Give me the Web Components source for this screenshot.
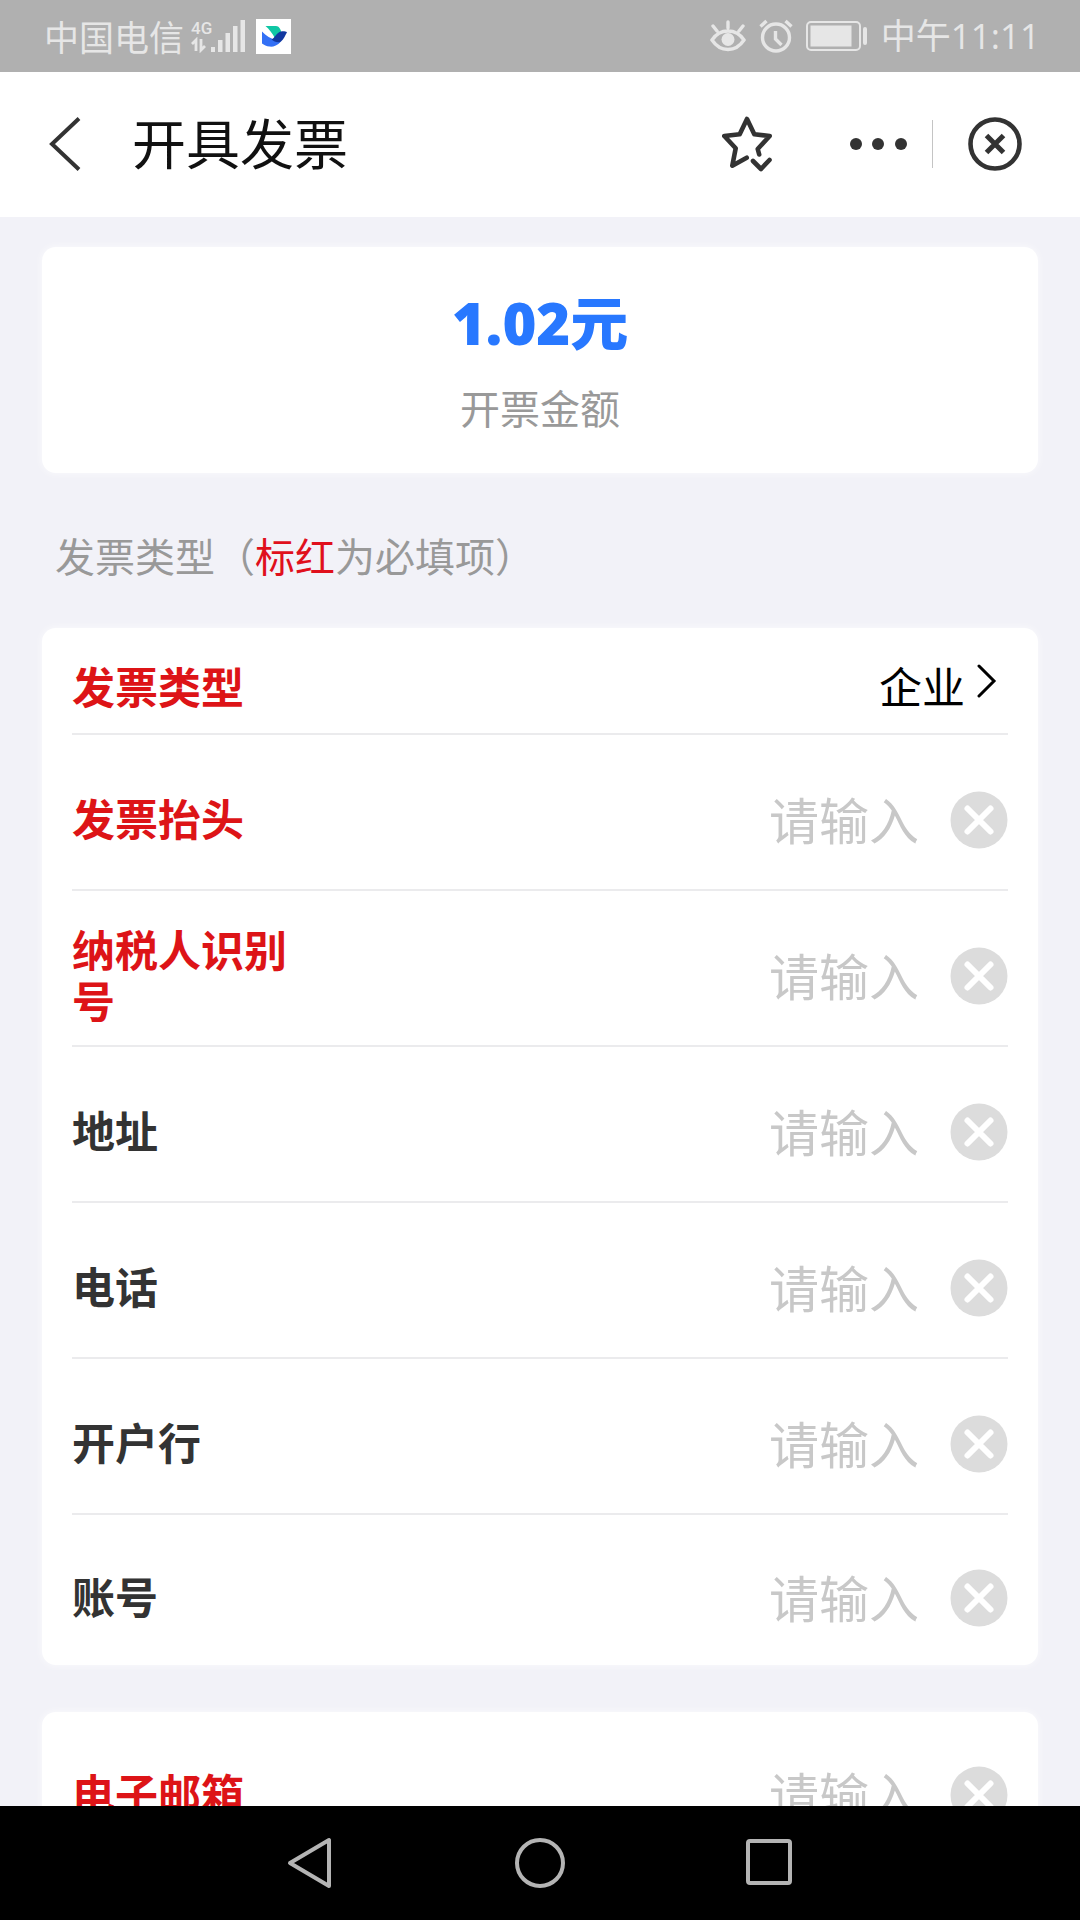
<!DOCTYPE html>
<html lang="zh-CN">
<head>
<meta charset="utf-8">
<meta name="viewport" content="width=device-width, initial-scale=1">
<title>开具发票</title>
<style>
  html, body { height: 100%; margin: 0; }
  body { font-family: "Noto Sans CJK SC", "Noto Sans", sans-serif; background: #f2f2f8; color: #333; }
</style>
</head>
<body>
<invoice-app>
  <status-bar slot="top" carrier="中国电信" time="中午11:11"></status-bar>
  <title-bar slot="top">开具发票</title-bar>

  <info-card><amount-view amount="1.02元">开票金额</amount-view></info-card>
  <section-title>发票类型（<span style="color:#e0101c">标红</span>为必填项）</section-title>
  <info-card>
    <select-row required>发票类型</select-row>
    <input-row required>发票抬头</input-row>
    <input-row required>纳税人识别号</input-row>
    <input-row>地址</input-row>
    <input-row>电话</input-row>
    <input-row>开户行</input-row>
    <input-row last>账号</input-row>
  </info-card>
  <info-card spaced>
    <input-row required last>电子邮箱</input-row>
  </info-card>

  <system-nav slot="bottom"></system-nav>
</invoice-app>

<script>
const define = (name, html, setup) => {
  const template = document.createElement('template');
  template.innerHTML = html;
  customElements.define(name, class extends HTMLElement {
    constructor() {
      super();
      this.attachShadow({ mode: 'open' }).append(template.content.cloneNode(true));
    }
    connectedCallback() { if (setup) setup(this, this.shadowRoot); }
  });
};

const buttonReset = `
  button { appearance: none; border: 0; margin: 0; padding: 0; background: none; color: inherit; font: inherit; display: flex; }
  svg { display: block; }
`;

define('invoice-app', `
  <style>
    :host { display: flex; flex-direction: column; height: 100vh; overflow: hidden; }
    main { flex: 1; min-height: 0; overflow: hidden; padding: 30px 42px 0; }
  </style>
  <slot name="top"></slot>
  <main><slot></slot></main>
  <slot name="bottom"></slot>
`);

define('status-bar', `
  <style>
    :host { display: flex; flex: none; align-items: center; height: 72px; padding: 0 40px 0 44px; background: #b0b0b0; color: #e6e6e6; font-size: 35px; line-height: 48px; }
    .left, .right { display: flex; align-items: center; }
    .left { flex: 1; gap: 7px; }
    .right { gap: 13px; }
    .logo { margin-left: 3px; }
    svg { display: block; }
    .net { display: flex; flex-direction: column; width: 20px; font: 500 17px/18px "Roboto", sans-serif; }
    .signal { display: flex; align-items: flex-end; }
    #time { font-family: "Open Sans", "Noto Sans CJK SC", sans-serif; }
  </style>
  <div class="left">
    <span id="carrier"></span>
    <div class="signal">
      <div class="net"><span>4G</span>
        <svg width="18" height="16" viewBox="0 0 18 16" fill="none" stroke="#e6e6e6" stroke-width="2.800"><path d="M1 7l4-4v11M10 2v11l4-4"/></svg>
      </div>
      <svg width="35" height="34" viewBox="0 0 35 34" fill="#e6e6e6"><path d="M0 28h4v5H0zM7 21h4.500v12H7zM14.500 14H19v19h-4.500zM22 7h4.500v26H22zM29.500 1H34v32h-4.500z"/></svg>
    </div>
    <svg class="logo" width="35" height="35" viewBox="0 0 35 35"><path fill="#fff" d="M0 0h35v35H0z"/><path fill="#0fc6a4" d="M9.500 7H20c3 0 5 3.500 5.300 6.500L19 19.500C17 15 13 10 9.500 7z"/><path fill="#3370f5" d="M6 12.500c4 4 9 7.500 14 8.500l5 1.500C21 27 17 28 13.500 27.600 10.500 27.300 8 26 6 24.500z"/><path fill="#1238a0" d="M15.500 20.500c3.500-1.500 5-7 9.500-8 2-.6 4.500-.3 6 .8-2 3-3 7-6 9.200-3 2-7 0-9.500-2z"/></svg>
  </div>
  <div class="right">
    <svg width="36" height="34" viewBox="0 0 36 34" fill="none" stroke="#e6e6e6" stroke-width="3.400" stroke-linecap="round"><path d="M2 21C6 15 11 12 18 12s12 3 16 9c-4 6-9 9.500-16 9.500S6 27 2 21zM18 9V3M7 12L3 7M29 12l4-5"/><circle cx="18" cy="20.500" r="6.500" fill="#e6e6e6" stroke="none"/></svg>
    <svg width="34" height="34" viewBox="0 0 34 34" fill="none" stroke="#e6e6e6" stroke-width="3.400"><circle cx="17" cy="18.500" r="13.500"/><path d="M16.500 12v8l6 6M1.500 7.500l6-5.500M26.500 2l6 5.500"/></svg>
    <svg width="62" height="32" viewBox="0 0 62 32"><rect x="1" y="2" width="53" height="28" rx="4" fill="none" stroke="#e6e6e6" stroke-width="2"/><rect x="4.500" y="5.500" width="41" height="21" fill="#e6e6e6"/><rect x="57" y="7" width="4" height="18" rx="2" fill="#e6e6e6"/></svg>
    <span id="time"></span>
  </div>
`, (host, root) => {
  root.getElementById('carrier').textContent = host.getAttribute('carrier');
  root.getElementById('time').textContent = host.getAttribute('time');
});

define('title-bar', `
  <style>
    ${buttonReset}
    :host { display: flex; flex: none; align-items: center; box-sizing: border-box; height: 145px; padding: 0 58px 2px 48px; background: #fff; }
    h1 { flex: 1; margin: 0 0 0 50px; padding-bottom: 4px; font-size: 54px; font-weight: 400; line-height: 72px; color: #111; }
    .more { margin-left: 76px; }
    .rule { width: 1px; height: 48px; margin: 0 35px 0 24px; background: #c4c4c4; }
  </style>
  <button aria-label="返回"><svg width="34" height="54" viewBox="0 0 34 54" fill="none" stroke="#333" stroke-width="4"><path d="M31 1.500L4 27l27 25.500"/></svg></button>
  <h1><slot></slot></h1>
  <button aria-label="收藏"><svg width="50" height="56" viewBox="0 0 50 56" fill="none" stroke="#333" stroke-width="4.600" stroke-linejoin="round" stroke-linecap="round"><path d="M24.700 41.700L10.300 49.700 13.700 32.300 2.300 20l15.400-1.700L25 3l7.300 15.300L47.700 20 35.700 33l1.500 5.500"/><path d="M31 45l8 8 8.500-9"/></svg></button>
  <button class="more" aria-label="更多"><svg width="60" height="14" viewBox="0 0 60 14" fill="#333"><circle cx="8" cy="7" r="6"/><circle cx="30" cy="7" r="6"/><circle cx="53" cy="7" r="6"/></svg></button>
  <span class="rule"></span>
  <button aria-label="关闭"><svg width="54" height="54" viewBox="0 0 54 54" fill="none" stroke="#333"><circle cx="27" cy="27" r="24.500" stroke-width="4.600"/><path d="M18.500 18.500l17 17M35.500 18.500l-17 17" stroke-width="5"/></svg></button>
`);

define('info-card', `
  <style>
    :host { display: block; box-sizing: border-box; padding: 0 30px; background: #fff; border-radius: 14px; box-shadow: 0 0 8px rgba(255,255,255,.7); }
    :host([spaced]) { margin-top: 47px; }
  </style>
  <slot></slot>
`);

define('amount-view', `
  <style>
    :host { display: flex; flex-direction: column; align-items: center; gap: 16px; padding: 38px 0 36px; }
    strong { font-family: "Open Sans", "Noto Sans CJK SC", sans-serif; font-size: 58px; line-height: 76px; font-weight: 800; color: #2878ff; }
    span { font-size: 40px; line-height: 60px; color: #999; }
  </style>
  <strong></strong><span><slot></slot></span>
`, (host, root) => { root.querySelector('strong').textContent = host.getAttribute('amount'); });

define('section-title', `
  <style>:host { display: block; padding: 52px 12px 43px 13px; font-size: 40px; line-height: 60px; color: #999; }</style>
  <slot></slot>
`);

const rowStyle = `
  ${buttonReset}
  :host { display: flex; align-items: center; box-sizing: border-box; border-bottom: 2px solid #ebebed; }
  label { width: 220px; font-size: 43px; line-height: 51px; font-weight: 700; color: #333; }
  label, input, select { padding: 0 0 5px; }
  :host([required]) label { color: #dd1417; }
`;

define('select-row', `
  <style>
    ${rowStyle}
    :host { height: 107px; padding: 15px 11px 0 0; gap: 12px; }
    select { appearance: none; margin: 0 0 0 auto; border: 0; background: none; font: inherit; font-size: 43px; line-height: 51px; color: #000; }
    svg { display: block; margin-bottom: 15px; }
  </style>
  <label for="field"><slot></slot></label>
  <select id="field"><option>企业</option></select>
  <svg width="20" height="34" viewBox="0 0 20 34" fill="none" stroke="#000" stroke-width="3" stroke-linecap="round"><path d="M2 2l15 15L2 32"/></svg>
`);

define('input-row', `
  <style>
    ${rowStyle}
    :host { height: 156px; padding-top: 16px; gap: 31px; }
    :host([last]) { border-bottom: 0; height: 150px; }
    input { flex: 1; min-width: 0; margin: 0; border: 0; outline: 0; background: none; font: inherit; font-size: 50px; line-height: 72px; height: 72px; text-align: right; color: #333; }
    input::placeholder { color: #c8c8c8; opacity: 1; }
  </style>
  <label for="field"><slot></slot></label>
  <input id="field" type="text" placeholder="请输入">
  <button aria-label="清除"><svg width="58" height="58" viewBox="0 0 58 58"><circle cx="29" cy="29" r="28.500" fill="#dcdcdc"/><path d="M17.500 17.500l23 23M40.500 17.500l-23 23" stroke="#fff" stroke-width="6" stroke-linecap="round"/></svg></button>
`);

define('system-nav', `
  <style>
    ${buttonReset}
    :host { display: flex; flex: none; align-items: center; justify-content: center; gap: 180px; height: 114px; background: #000; }
  </style>
  <button aria-label="返回"><svg width="50" height="54" viewBox="0 0 50 54" fill="none" stroke="#b4b4b4" stroke-width="4" stroke-linejoin="round"><path d="M44 4v46L5 27z"/></svg></button>
  <button aria-label="主页"><svg width="50" height="50" viewBox="0 0 50 50" fill="none" stroke="#b4b4b4" stroke-width="4"><circle cx="25" cy="25" r="23"/></svg></button>
  <button aria-label="最近任务"><svg width="50" height="50" viewBox="0 0 50 50" fill="none" stroke="#b4b4b4" stroke-width="4"><rect x="3" y="3" width="42" height="42" rx="2"/></svg></button>
`);
</script>
</body>
</html>
